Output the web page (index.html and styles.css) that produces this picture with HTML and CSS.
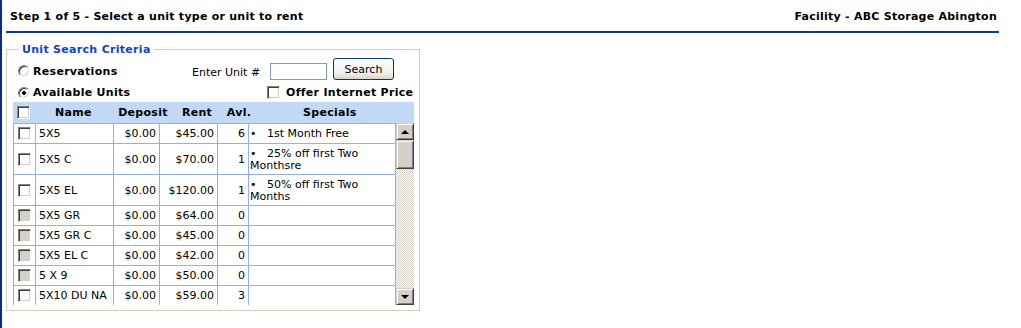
FILE: index.html
```html
<!DOCTYPE html>
<html>
<head>
    <title>Step 1 of 5 - Select a unit</title>
    <link rel="stylesheet" href="styles.css">
</head>
<body>
    <div class="page">
        <div class="topbar">
            <span class="step">Step 1 of 5 - Select a unit type or unit to rent</span>
            <span class="facility">Facility - ABC Storage Abington</span>
        </div>

        <fieldset class="criteria">
            <legend>Unit Search Criteria</legend>

            <div class="line line-one">
                <label class="opt"><input type="radio" name="mode" class="rb">Reservations</label>
                <span class="enter-label">Enter Unit #</span>
                <input type="text" class="unit-box">
                <button class="search-btn">Search</button>
            </div>

            <div class="line line-two">
                <label class="opt opt-wide"><input type="radio" name="mode" class="rb" checked>Available Units</label>
                <label class="offer"><input type="checkbox" class="cb">Offer Internet Price</label>
            </div>

            <table class="head">
                <tr>
                    <th class="c-check"><input type="checkbox" class="cb"></th>
                    <th class="c-name">Name</th>
                    <th class="c-dep">Deposit</th>
                    <th class="c-rent">Rent</th>
                    <th class="c-avl">Avl.</th>
                    <th class="c-spec">Specials</th>
                </tr>
            </table>

            <div class="grid">
                <div class="grid-body">
                    <table class="units">
                        <colgroup>
                            <col class="w-check"><col class="w-name"><col class="w-dep"><col class="w-rent"><col class="w-avl"><col class="w-spec">
                        </colgroup>
                        <tr>
                            <td class="chk"><input type="checkbox" class="cb"></td>
                            <td>5X5</td><td class="num">$0.00</td><td class="num">$45.00</td><td class="num">6</td>
                            <td class="spec">&bull;&nbsp;&nbsp;&nbsp;1st Month Free</td>
                        </tr>
                        <tr class="tall">
                            <td class="chk"><input type="checkbox" class="cb"></td>
                            <td>5X5 C</td><td class="num">$0.00</td><td class="num">$70.00</td><td class="num">1</td>
                            <td class="spec">&bull;&nbsp;&nbsp;&nbsp;25% off first Two Monthsre</td>
                        </tr>
                        <tr class="tall">
                            <td class="chk"><input type="checkbox" class="cb"></td>
                            <td>5X5 EL</td><td class="num">$0.00</td><td class="num">$120.00</td><td class="num">1</td>
                            <td class="spec">&bull;&nbsp;&nbsp;&nbsp;50% off first Two Months</td>
                        </tr>
                        <tr>
                            <td class="chk"><input type="checkbox" class="cb" disabled></td>
                            <td>5X5 GR</td><td class="num">$0.00</td><td class="num">$64.00</td><td class="num">0</td>
                            <td class="spec"></td>
                        </tr>
                        <tr>
                            <td class="chk"><input type="checkbox" class="cb" disabled></td>
                            <td>5X5 GR C</td><td class="num">$0.00</td><td class="num">$45.00</td><td class="num">0</td>
                            <td class="spec"></td>
                        </tr>
                        <tr>
                            <td class="chk"><input type="checkbox" class="cb" disabled></td>
                            <td>5X5 EL C</td><td class="num">$0.00</td><td class="num">$42.00</td><td class="num">0</td>
                            <td class="spec"></td>
                        </tr>
                        <tr>
                            <td class="chk"><input type="checkbox" class="cb" disabled></td>
                            <td>5 X 9</td><td class="num">$0.00</td><td class="num">$50.00</td><td class="num">0</td>
                            <td class="spec"></td>
                        </tr>
                        <tr>
                            <td class="chk"><input type="checkbox" class="cb"></td>
                            <td>5X10 DU NA</td><td class="num">$0.00</td><td class="num">$59.00</td><td class="num">3</td>
                            <td class="spec"></td>
                        </tr>
                        <!-- next row sits below the fold of the scroll box -->
                        <tr>
                            <td></td><td></td><td></td><td></td><td></td><td></td>
                        </tr>
                    </table>
                </div>

                <div class="scrollbar">
                    <div class="sb-btn"><span class="arrow-up"></span></div>
                    <div class="sb-thumb"></div>
                    <div class="sb-track"></div>
                    <div class="sb-btn"><span class="arrow-down"></span></div>
                </div>
            </div>
        </fieldset>
    </div>
</body>
</html>
```

FILE: styles.css
```css
body {
    margin: 0;
    font-family: "DejaVu Sans", Verdana, sans-serif;
    font-size: 11px;
    color: #000;
    background: #fff;
}
.page {
    height: 328px;
    border-left: 2px solid #0a2a8c;
    box-sizing: border-box;
    overflow: hidden;
}
.topbar {
    margin-left: 4px;
    width: 993px;
    height: 33px;
    box-sizing: border-box;
    padding: 1px 2px 0 4px;
    border-bottom: 2px solid #0a37a3;
    display: flex;
    justify-content: space-between;
    align-items: center;
    font-weight: bold;
    letter-spacing: 0.25px;
}
.criteria {
    margin: 10px 0 0 4px;
    width: 414px;
    box-sizing: border-box;
    padding: 0 5px 5px 6px;
    border: 1px solid #d0d0bf;
}
.criteria legend {
    margin-left: 6px;
    padding: 0 3px;
    color: #0b46c8;
    font-weight: bold;
    letter-spacing: 0.3px;
    line-height: 13px;
}
.line {
    display: flex;
    align-items: center;
}
.line-one {
    height: 24px;
    margin-top: 3px;
}
.line-two {
    height: 19px;
}
.opt {
    width: 174px;
    padding-left: 5px;
    display: flex;
    align-items: center;
    font-weight: bold;
    letter-spacing: 0.3px;
}
.opt-wide {
    width: 249px;
}
.rb {
    appearance: none;
    width: 12px;
    height: 12px;
    margin: 0 3px 0 0;
    border-radius: 50%;
    border: 1px solid;
    border-color: #808080 #fff #fff #808080;
    box-shadow: inset 1px 1px #404040, inset -1px -1px #d4d0c8;
    background: #fff;
}
.rb:checked {
    background: radial-gradient(circle, #000 0 1.6px, #fff 2.2px);
}
.enter-label {
    width: 78px;
    padding-top: 2px;
}
.unit-box {
    width: 57px;
    height: 17px;
    box-sizing: border-box;
    margin: 0 6px 0 0;
    border: 1px solid #7f9db9;
    padding: 0 2px;
}
.search-btn {
    width: 61px;
    height: 22px;
    margin-top: -4px;
    padding: 0;
    border: 1px solid #003c74;
    border-radius: 3px;
    background: linear-gradient(#fff, #f1f0ec 70%, #d8d4cb);
    font-family: inherit;
    font-size: 11px;
    color: #000;
}
.offer {
    display: flex;
    align-items: center;
    font-weight: bold;
    letter-spacing: 0.3px;
}
.cb {
    appearance: none;
    width: 13px;
    height: 13px;
    margin: 0;
    border: 1px solid;
    border-color: #808080 #fff #fff #808080;
    box-shadow: inset 1px 1px #404040, inset -1px -1px #d4d0c8;
    background: #fff;
}
.cb:disabled {
    background: #d4d0c8;
}
.offer .cb {
    margin-right: 6px;
}
.head {
    width: 401px;
    height: 21px;
    border-collapse: collapse;
    table-layout: fixed;
    background: #c1d8f6;
}
.head th {
    padding: 0;
    font-weight: bold;
    letter-spacing: 0.3px;
}
.head .c-check { width: 22px; }
.head .c-name { width: 77px; }
.head .c-dep { width: 62px; }
.head .c-rent { width: 46px; }
.head .c-avl { width: 38px; }
.head .c-spec { text-align: left; padding-left: 45px; }
.head .cb { display: block; margin-left: 4px; }
.grid {
    display: flex;
    height: 182px;
}
.grid-body {
    width: 383px;
    overflow: hidden;
}
.units {
    width: 383px;
    border-collapse: collapse;
    table-layout: fixed;
}
.w-check { width: 22px; }
.w-name { width: 78px; }
.w-dep { width: 46px; }
.w-rent { width: 58px; }
.w-avl { width: 31px; }
.units td {
    height: 18px;
    padding: 1px 3px 0;
    border: 1px solid #93aeea;
    line-height: 12px;
    white-space: nowrap;
    overflow: hidden;
}
.units tr.tall td {
    height: 29px;
}
.units td.spec {
    white-space: normal;
    padding: 1px 1px 0 1px;
}
.units td.num {
    text-align: right;
}
.units td.chk {
    padding: 0 0 0 4px;
}
.units td.chk .cb {
    display: block;
}
.scrollbar {
    width: 18px;
    display: flex;
    flex-direction: column;
}
.sb-btn,
.sb-thumb {
    box-sizing: border-box;
    background: #d4d0c8;
    border: 1px solid;
    border-color: #d4d0c8 #404040 #404040 #d4d0c8;
    box-shadow: inset 1px 1px #fff, inset -1px -1px #808080;
}
.sb-btn {
    height: 17px;
    display: flex;
    align-items: center;
    justify-content: center;
}
.sb-thumb {
    height: 29px;
}
.sb-track {
    flex: 1;
    background: repeating-conic-gradient(#d4d0c8 0 25%, #fff 0 50%) 0 0 / 2px 2px;
}
.arrow-up {
    border: 4px solid transparent;
    border-top: 0;
    border-bottom: 4px solid #000;
}
.arrow-down {
    border: 4px solid transparent;
    border-bottom: 0;
    border-top: 4px solid #000;
}
```
